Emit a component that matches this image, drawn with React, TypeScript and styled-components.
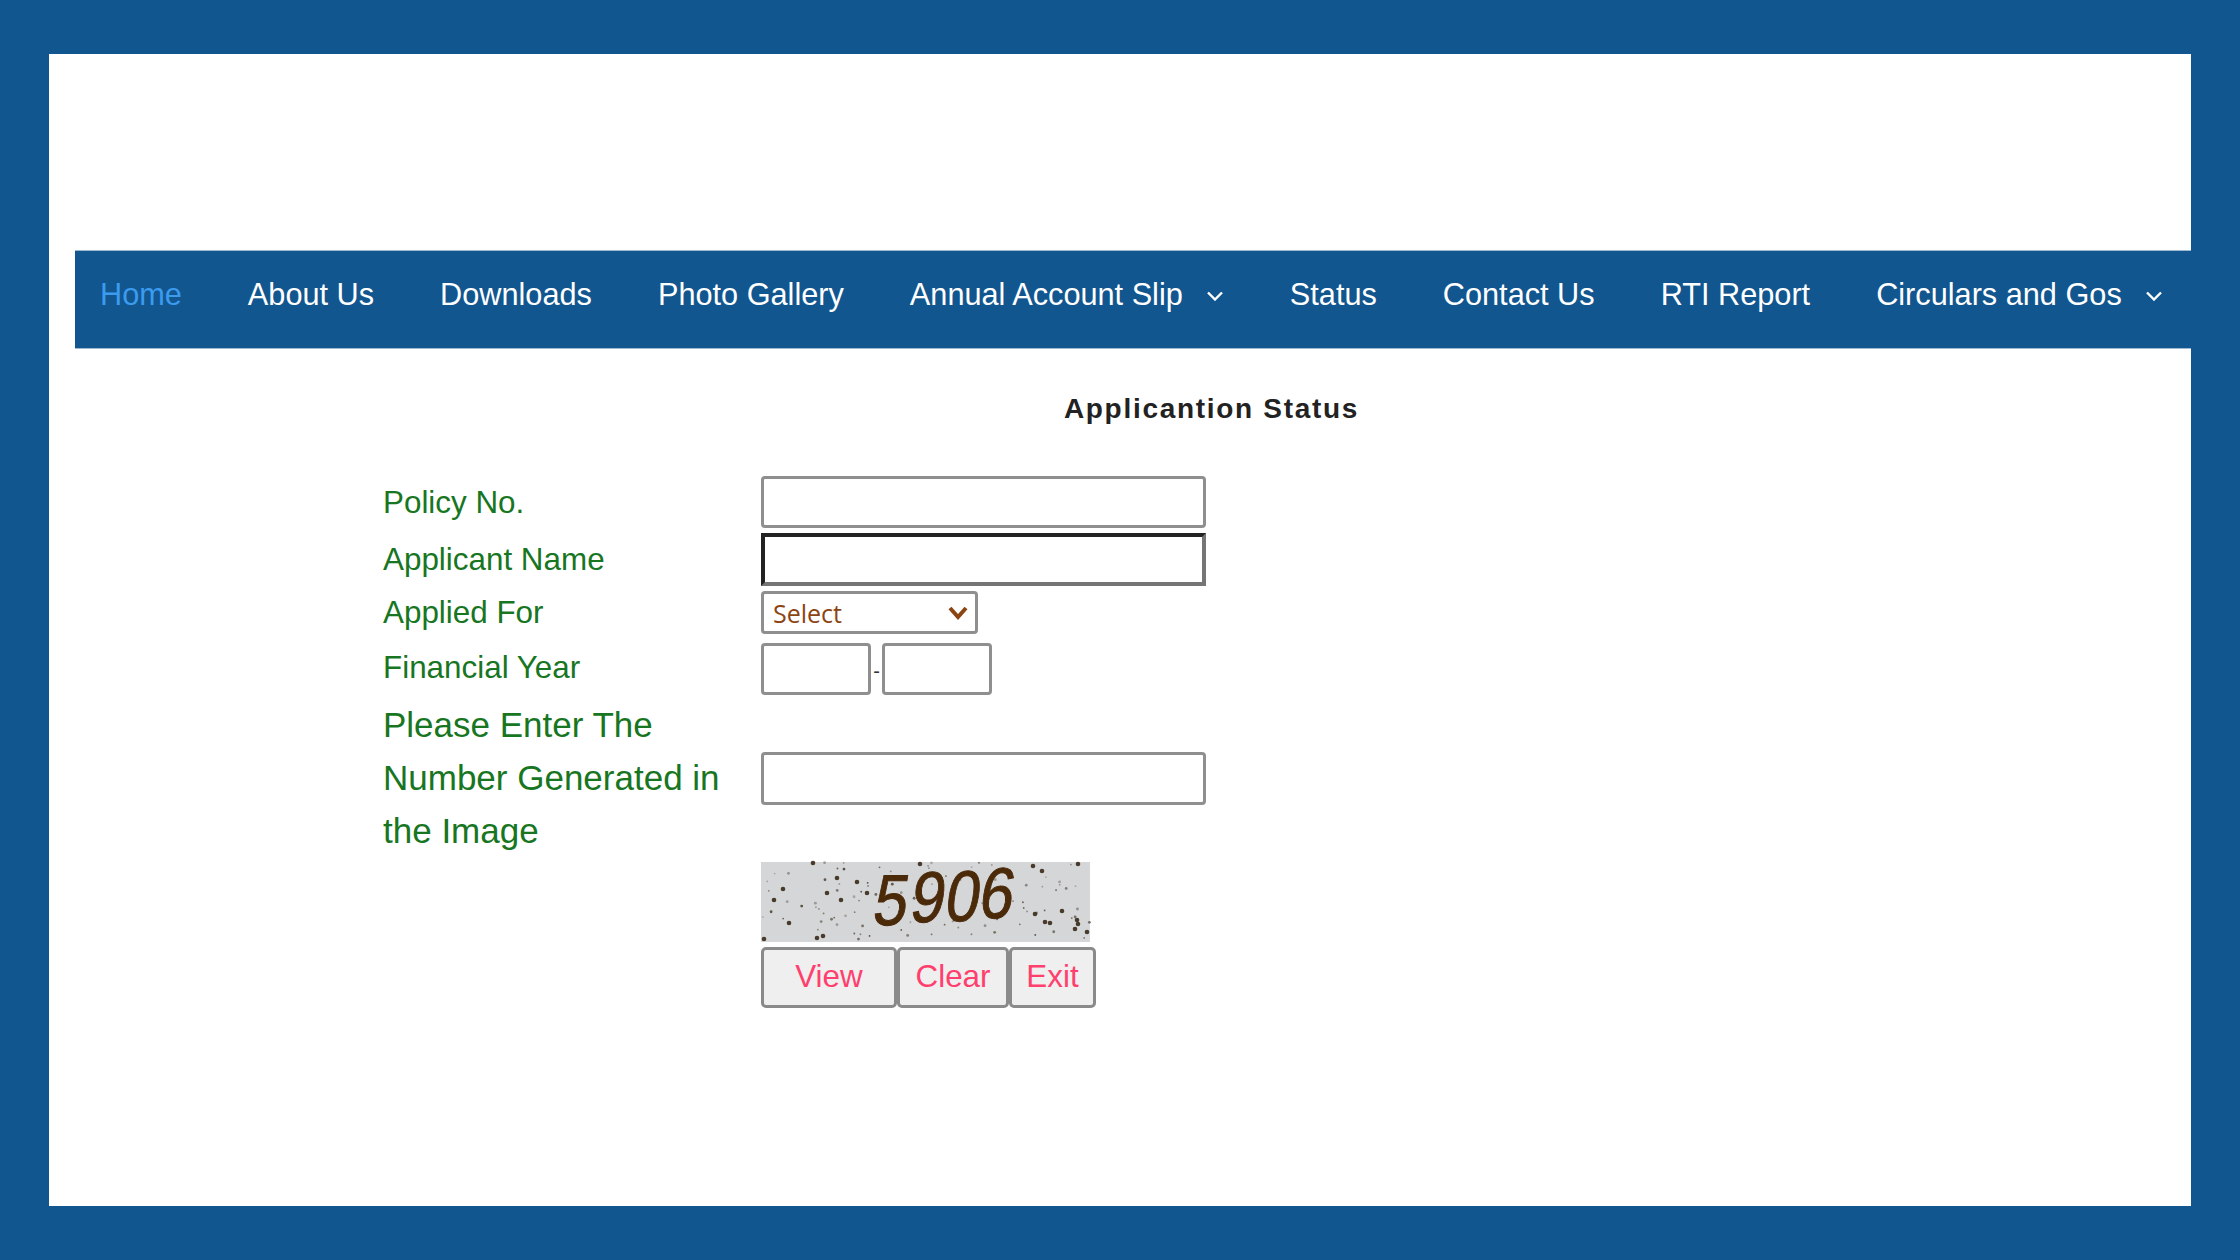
import React from 'react';
import styled, { createGlobalStyle } from 'styled-components';

const NAV_ITEMS = [
  { label: 'Home', active: true },
  { label: 'About Us' },
  { label: 'Downloads' },
  { label: 'Photo Gallery' },
  { label: 'Annual Account Slip', caret: true },
  { label: 'Status' },
  { label: 'Contact Us' },
  { label: 'RTI Report' },
  { label: 'Circulars and Gos', caret: true },
];

// fixed seed so the captcha noise stays the same on every load
const makeSpeckles = (count: number) => {
  let seed = 5906;
  const next = () => {
    seed = (seed * 16807) % 2147483647;
    return seed / 2147483647;
  };
  return Array.from({ length: count }, () => {
    const big = next();
    return {
      x: next() * 329,
      y: next() * 80,
      r: big > 0.6 ? 1.4 : 0.9,
      o: 0.25 + next() * 0.55,
    };
  });
};

const SPECKLES = makeSpeckles(100);

// the dark blobs that stand out in the captcha
const BLOBS = [
  [272, 4], [281, 9], [317, 2], [76, 16], [66, 31], [13, 38], [22, 27], [28, 61],
  [3, 77], [56, 76], [80, 38], [274, 52], [289, 61], [301, 49], [317, 62], [314, 67],
  [326, 70], [159, 2], [52, 1], [96, 20], [106, 31], [62, 74], [284, 60], [316, 58],
];

const DIGITS = [
  { ch: '5', x: 127, y: 63 },
  { ch: '9', x: 164, y: 60 },
  { ch: '0', x: 199, y: 59 },
  { ch: '6', x: 233, y: 56 },
];

const Caret = () => (
  <CaretIcon viewBox="0 0 16 10" aria-hidden="true">
    <polyline points="1,1.5 8,8.5 15,1.5" fill="none" stroke="currentColor" strokeWidth="2.4" />
  </CaretIcon>
);

const Captcha = () => (
  <CaptchaImage viewBox="0 0 329 80" role="img" aria-label="captcha">
    <rect width="329" height="80" fill="#d4d6d8" />
    {SPECKLES.map((s, i) => (
      <circle key={i} cx={s.x} cy={s.y} r={s.r} fill="#3a2c1c" opacity={s.o} />
    ))}
    {BLOBS.map(([x, y]) => (
      <circle key={`${x}-${y}`} cx={x} cy={y} r="2.3" fill="#3a2a1a" opacity="0.9" />
    ))}
    {DIGITS.map(d => (
      <CaptchaDigit
        key={d.ch}
        transform={`translate(${d.x} ${d.y}) skewX(-9)`}
        textAnchor="middle"
        textLength="34"
        lengthAdjust="spacingAndGlyphs"
      >
        {d.ch}
      </CaptchaDigit>
    ))}
  </CaptchaImage>
);

export default function App() {
  return (
    <>
      <GlobalStyle />
      <Page>
        <Panel>
          <Nav>
            {NAV_ITEMS.map(item => (
              <NavItem key={item.label} $active={item.active}>
                {item.label}
                {item.caret && <Caret />}
              </NavItem>
            ))}
          </Nav>

          <Title>Applicantion Status</Title>

          <Form>
            <Label $offset={2}>Policy No.</Label>
            <Field>
              <TextInput $width={445} $height={52} />
            </Field>

            <Label>Applicant Name</Label>
            <Field>
              <FocusedInput />
            </Field>

            <Label>Applied For</Label>
            <Field>
              <SelectWrap>
                <Select defaultValue="Select">
                  <option>Select</option>
                </Select>
                <SelectArrow viewBox="0 0 20 14" aria-hidden="true">
                  <polyline points="2,2 10,11 18,2" fill="none" stroke="#8b4513" strokeWidth="4" />
                </SelectArrow>
              </SelectWrap>
            </Field>

            <YearLabel>Financial Year</YearLabel>
            <YearField>
              <TextInput $width={110} $height={52} />
              <Dash>-</Dash>
              <TextInput $width={110} $height={52} />
            </YearField>

            <BigLabel>Please Enter The Number Generated in the Image</BigLabel>
            <Field>
              <TextInput $width={445} $height={53} />
            </Field>

            <span />
            <Captcha />

            <span />
            <Buttons>
              <Button type="button" $width={136}>View</Button>
              <Button type="button" $width={112}>Clear</Button>
              <Button type="button" $width={87}>Exit</Button>
            </Buttons>
          </Form>
        </Panel>
      </Page>
    </>
  );
}

const GlobalStyle = createGlobalStyle`
  html, body {
    margin: 0;
    padding: 0;
    background: #12568f;
  }
  * {
    box-sizing: border-box;
  }
`;

const Page = styled.div`
  width: 2240px;
  height: 1260px;
  padding: 54px 49px;
  background: #12568f;
  font-family: 'Liberation Sans', Arial, sans-serif;
`;

const Panel = styled.main`
  height: 1152px;
  padding: 196px 0 0 26px;
  background: #fff;
`;

const Nav = styled.nav`
  display: flex;
  align-items: flex-start;
  gap: 66px;
  height: 99px;
  padding: 26px 0 0 25px;
  background: #12568f;
  border-top: 1px solid #9db9d1;
  border-bottom: 1px solid #9db9d1;
`;

const NavItem = styled.a<{ $active?: boolean }>`
  display: flex;
  align-items: center;
  gap: 24px;
  font-size: 30.7px;
  line-height: 36px;
  white-space: nowrap;
  color: ${props => (props.$active ? '#3b9bee' : '#fff')};
`;

const CaretIcon = styled.svg`
  width: 16px;
  height: 10px;
  margin: 2px 1px 0 0;
`;

const Title = styled.h1`
  margin: 42px 0 0;
  padding-left: 157px;
  text-align: center;
  font-size: 28px;
  line-height: 36px;
  font-weight: bold;
  letter-spacing: 1.7px;
  color: #222;
`;

const Form = styled.form`
  display: grid;
  grid-template-columns: 378px auto;
  justify-content: start;
  row-gap: 5px;
  margin: 49px 0 0 308px;
`;

const Label = styled.label<{ $offset?: number }>`
  display: flex;
  align-items: center;
  padding-top: ${props => props.$offset ?? 0}px;
  font-size: 31.4px;
  color: #17761f;
`;

const YearLabel = styled(Label)`
  margin-top: 2px;
`;

const BigLabel = styled.label`
  width: 345px;
  margin-top: -2px;
  font-size: 35px;
  line-height: 53px;
  color: #17761f;
`;

const Field = styled.div`
  display: flex;
  align-items: center;
`;

const YearField = styled(Field)`
  margin-top: 4px;
`;

const TextInput = styled.input<{ $width: number; $height: number }>`
  width: ${props => props.$width}px;
  height: ${props => props.$height}px;
  padding: 0;
  background: #fff;
  border: 3px solid #8f8f8f;
  border-radius: 4px;
  outline: none;
`;

const FocusedInput = styled.input`
  width: 445px;
  height: 53px;
  padding: 0;
  background: #fff;
  border-style: solid;
  border-width: 4px;
  border-color: #222 #757575 #757575 #222;
  outline: none;
`;

const SelectWrap = styled.div`
  position: relative;
  width: 217px;
  height: 43px;
`;

const Select = styled.select`
  width: 100%;
  height: 100%;
  padding: 0 0 0 9px;
  appearance: none;
  background: #fff;
  border: 3px solid #8f8f8f;
  border-radius: 4px;
  font-family: 'Open Sans', 'Noto Sans', sans-serif;
  font-size: 25px;
  color: #8b4513;
  outline: none;
`;

const SelectArrow = styled.svg`
  position: absolute;
  top: 15px;
  right: 10px;
  width: 20px;
  height: 14px;
  pointer-events: none;
`;

const Dash = styled.span`
  width: 11px;
  margin-top: 4px;
  text-align: center;
  font-size: 20px;
  color: #333;
`;

const CaptchaImage = styled.svg`
  display: block;
  width: 329px;
  height: 80px;
  overflow: visible;
  filter: blur(0.6px);
`;

const CaptchaDigit = styled.text`
  font-family: 'Liberation Sans', Arial, sans-serif;
  font-size: 72px;
  fill: #4b2a0a;
  stroke: #4b2a0a;
  stroke-width: 1;
`;

const Buttons = styled.div`
  display: flex;
`;

const Button = styled.button<{ $width: number }>`
  width: ${props => props.$width}px;
  height: 61px;
  padding: 0 0 2px;
  background: #efefef;
  border: 3px solid #8a8a8a;
  border-radius: 5px;
  font-family: 'Liberation Sans', Arial, sans-serif;
  font-size: 31.4px;
  color: #ff3f6e;
`;
